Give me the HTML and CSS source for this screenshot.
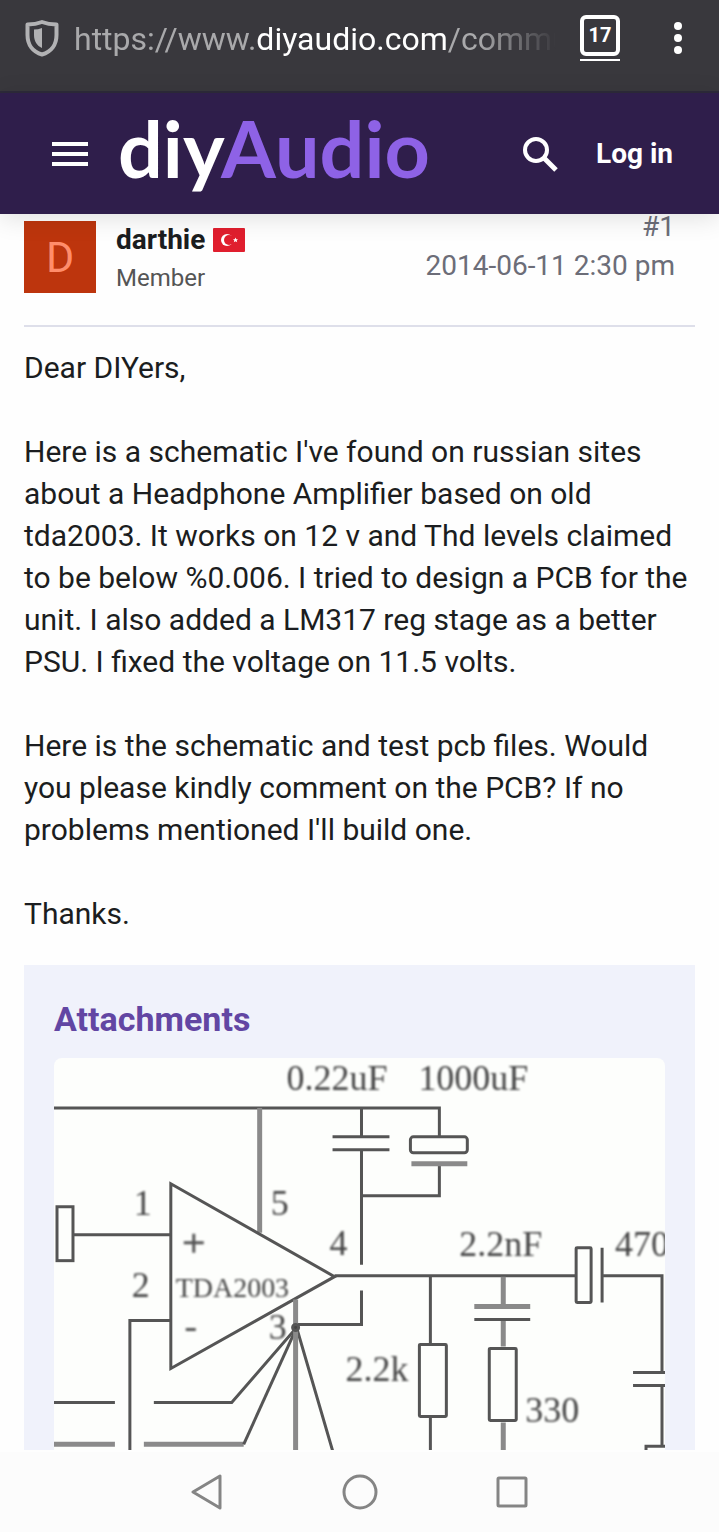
FILE: index.html
```html
<!DOCTYPE html>
<html lang="en">
<head>
    <meta charset="UTF-8">
    <meta name="viewport" content="width=device-width, initial-scale=1.0">
    <title>diyAudio</title>
    <link rel="stylesheet" href="styles.css">
</head>
<body>
    <!-- Browser bar -->
    <div class="browser-bar">
        <svg class="shield" viewBox="0 0 34 38" aria-hidden="true">
            <path d="M17 3 C12 5 7 5.500 2.500 5.500 V16 C2.500 26 8 33 17 35.500 C26 33 31.500 26 31.500 16 V5.500 C27 5.500 22 5 17 3 Z" fill="none" stroke="#b2b2b4" stroke-width="4" stroke-linejoin="round"/>
            <path d="M17 9 V29 C12 27 9 22 9 16 V10.500 Q13 10.500 17 9 Z" fill="#b2b2b4"/>
        </svg>
        <button class="url" type="button">https://www.<span class="domain">diyaudio.com</span>/commu</button>
        <button class="tabs" type="button" aria-label="Tabs"><span class="tab-count">17</span></button>
        <button class="more" type="button" aria-label="More">
            <svg viewBox="0 0 10 34" width="10" height="34">
                <circle cx="5" cy="5" r="4"/>
                <circle cx="5" cy="17" r="4"/>
                <circle cx="5" cy="29" r="4"/>
            </svg>
        </button>
    </div>

    <!-- Site header -->
    <header class="site-header">
        <button class="menu" type="button" aria-label="Menu">
            <svg viewBox="0 0 36 26" width="36" height="26">
                <path d="M0 3H36M0 13H36M0 23H36" stroke="#fff" stroke-width="4"/>
            </svg>
        </button>
        <a class="logo" href="#">diy<span class="logo-audio">Audio</span></a>
        <a class="search" href="#" aria-label="Search">
            <svg viewBox="0 0 36 36" width="36" height="36" fill="none" stroke="#fff">
                <circle cx="14" cy="14" r="11" stroke-width="4"/>
                <path d="M22 22L34 34" stroke-width="5"/>
            </svg>
        </a>
        <a class="login" href="#">Log in</a>
    </header>

    <main class="post">
        <div class="post-head">
            <a class="avatar" href="#">D</a>
            <div class="user">
                <a class="user-name" href="#">darthie
                    <svg class="flag" viewBox="0 0 32 24" width="32" height="24" aria-hidden="true">
                        <rect width="32" height="24" rx="1" fill="#e01e2e"/>
                        <circle cx="14" cy="12" r="6" fill="#fff"/>
                        <circle cx="16" cy="12" r="5" fill="#e01e2e"/>
                        <path d="M22.500 9.500L23.300 11.200L25 11.300L23.700 12.500L24.200 14.300L22.500 13.300L20.800 14.300L21.300 12.500L20 11.300L21.700 11.200Z" fill="#fff"/>
                    </svg>
                </a>
                <div class="user-title">Member</div>
            </div>
            <div class="post-info">
                <a href="#">#1</a>
                <time datetime="2014-06-11T14:30">2014-06-11 2:30 pm</time>
            </div>
        </div>

        <div class="post-body">
            <p>Dear DIYers,</p>
            <p>Here is a schematic I've found on russian sites about a Headphone Amplifier based on old tda2003. It works on 12 v and Thd levels claimed to be below %0.006. I tried to design a PCB for the unit. I also added a LM317 reg stage as a better PSU. I fixed the voltage on 11.5 volts.</p>
            <p>Here is the schematic and test pcb files. Would you please kindly comment on the PCB? If no problems mentioned I'll build one.</p>
            <p>Thanks.</p>
        </div>

        <section class="attachments">
            <h2>Attachments</h2>
            <svg class="schematic" viewBox="0 0 612 393" role="img" aria-label="TDA2003 amplifier schematic">
                <g class="wires">
                    <!-- supply rail and its capacitors -->
                    <path d="M-5 50H386V79M308 50V78M279 79H336M279 92H336M308 93V207"/>
                    <path class="soft" d="M206 50V175"/>
                    <rect x="357" y="79" width="57" height="16" rx="3"/>
                    <path d="M386 107V138H309"/>
                    <path class="soft" d="M358 106H414"/>
                    <!-- amplifier and inputs -->
                    <path d="M117 126V311L281 219Z"/>
                    <rect x="3" y="149" width="16" height="54"/>
                    <path d="M20 177H117M117 263H76V400"/>
                    <!-- ground star -->
                    <path d="M308 233V267H243M-5 345H61M100 345H178L243 270L281 400"/>
                    <path class="soft" d="M-5 387H61M90 387H190"/>
                    <path d="M190 387L243 270"/>
                    <path class="soft" d="M242 242V400"/>
                    <circle class="dot" cx="242" cy="270" r="3"/>
                    <!-- output network -->
                    <path d="M281 218H522M550 218H609V315M377 218V286M377 360V400"/>
                    <rect x="366" y="287" width="27" height="72" rx="1"/>
                    <path class="soft" d="M450 219V248M450 262V289M450 365V400M421 249H477"/>
                    <path d="M421 262H477"/>
                    <rect x="436" y="291" width="27" height="72" rx="1"/>
                    <rect x="523" y="190" width="15" height="55" rx="1"/>
                    <path d="M549 190V245M580 315H615M580 328H615M609 328V388M593 393V389H615"/>
                </g>
                <path class="sign" d="M130 185H150M140 176V195M132 272H142"/>
                <g class="labels">
                    <text x="233" y="32">0.22uF</text>
                    <text x="365" y="32">1000uF</text>
                    <text x="80" y="157">1</text>
                    <text x="217" y="157">5</text>
                    <text x="276" y="197">4</text>
                    <text x="78" y="239">2</text>
                    <text class="chip" x="122" y="239">TDA2003</text>
                    <text x="215" y="281">3</text>
                    <text x="406" y="198">2.2nF</text>
                    <text x="562" y="198">470</text>
                    <text x="292" y="324">2.2k</text>
                    <text x="472" y="365">330</text>
                </g>
            </svg>
        </section>
    </main>

    <!-- System navigation -->
    <nav class="system-nav">
        <button type="button" aria-label="Back">
            <svg viewBox="0 0 36 36" width="36" height="36"><path d="M30 2V34L3 18Z"/></svg>
        </button>
        <button type="button" aria-label="Home">
            <svg viewBox="0 0 36 36" width="36" height="36"><circle cx="18" cy="18" r="16"/></svg>
        </button>
        <button type="button" aria-label="Recent apps">
            <svg viewBox="0 0 36 36" width="36" height="36"><rect x="4" y="4" width="28" height="28" rx="1"/></svg>
        </button>
    </nav>
</body>
</html>
```
FILE: styles.css
```css
* {
    box-sizing: border-box;
}

body {
    display: flex;
    flex-direction: column;
    min-height: 100vh;
    margin: 0;
    font-family: Roboto, "Liberation Sans", sans-serif;
    font-size: 30px;
    line-height: 42px;
    color: #1b1d20;
    background-color: #fefefe;
}

a {
    color: inherit;
    text-decoration: none;
}

button {
    padding: 0;
    border: none;
    background: none;
    font-family: inherit;
    cursor: pointer;
}

svg {
    display: block;
}

/* Browser bar */
.browser-bar {
    display: flex;
    align-items: center;
    padding: 15px 36px 30px 25px;
    background-color: #39383d;
    border-bottom: 2px solid #2d2a3a;
}

.shield {
    width: 34px;
    height: 38px;
    flex: none;
}

.url {
    flex: 1;
    min-width: 0;
    margin: 0 24px 0 15px;
    padding-top: 2px;
    overflow: hidden;
    font-size: 32px;
    line-height: 44px;
    text-align: left;
    white-space: nowrap;
    color: #a9a9ab;
    -webkit-mask-image: linear-gradient(to right, #000 84%, transparent);
    mask-image: linear-gradient(to right, #000 84%, transparent);
}

.domain {
    color: #fff;
}

.tabs {
    padding-bottom: 3px;
    border-bottom: 2px solid #fff;
}

.tab-count {
    display: block;
    width: 40px;
    border: 4px solid #fff;
    border-radius: 6px;
    font-size: 20px;
    font-weight: bold;
    line-height: 33px;
    color: #fff;
}

.more {
    margin-left: 53px;
    fill: #fff;
}

/* Site header */
.site-header {
    position: relative;
    display: flex;
    align-items: center;
    height: 121px;
    padding: 0 46px 0 52px;
    color: #fff;
    background-color: #2f1e4b;
    box-shadow: 0 4px 24px rgba(0, 0, 0, 0.12);
}

.logo {
    margin-left: 30px;
    padding-bottom: 12px;
    font-family: Lato, sans-serif;
    font-size: 79px;
    font-weight: bold;
    line-height: 96px;
}

.logo-audio {
    color: #8e62e6;
}

.search {
    margin-left: auto;
}

.login {
    margin-left: 38px;
    font-size: 28px;
    font-weight: bold;
}

/* Post */
.post {
    flex: 1;
    padding: 0 24px;
}

.post-head {
    display: flex;
    align-items: flex-start;
    padding: 7px 0 28px;
    border-bottom: 2px solid #dedfea;
}

.avatar {
    width: 72px;
    font-size: 43px;
    line-height: 72px;
    text-align: center;
    color: #ff8d6b;
    background-color: #bd350d;
}

.user {
    margin-left: 20px;
}

.user-name {
    display: flex;
    align-items: center;
    gap: 8px;
    font-size: 28px;
    font-weight: bold;
    line-height: 38px;
}

.user-title {
    font-size: 24px;
    line-height: 38px;
    color: #555;
}

.post-info {
    display: flex;
    flex-direction: column;
    align-items: flex-end;
    margin: -14px 20px 0 auto;
    font-size: 28px;
    line-height: 39px;
    color: #6c6d78;
}

.post-body {
    padding: 20px 0 30px;
}

.post-body p {
    margin: 0 0 42px;
}

.post-body p:last-child {
    margin-bottom: 0;
}

/* Attachments */
.attachments {
    padding: 33px 30px 0;
    background-color: #f0f2fb;
}

.attachments h2 {
    margin: 0 0 18px;
    font-size: 34px;
    line-height: 42px;
    color: #6246a3;
}

.schematic {
    width: 100%;
    border-radius: 8px 8px 0 0;
    background-color: #fdfefc;
}

.wires {
    fill: none;
    stroke: #555;
    stroke-width: 3;
    filter: blur(0.7px);
}

.wires .soft {
    stroke: #8a8a8a;
    stroke-width: 5;
}

.wires .dot {
    fill: #444;
}

.sign {
    stroke: #555;
    stroke-width: 3;
    filter: blur(1px);
}

.labels {
    font-family: "Liberation Serif", serif;
    font-size: 36px;
    fill: #444;
    filter: blur(1px);
}

.chip {
    font-size: 28px;
}

/* System navigation */
.system-nav {
    display: flex;
    justify-content: center;
    gap: 116px;
    padding: 22px 0;
    background-color: #fcfcfc;
}

.system-nav svg {
    fill: none;
    stroke: #858585;
    stroke-width: 3;
    stroke-linejoin: round;
}
```
